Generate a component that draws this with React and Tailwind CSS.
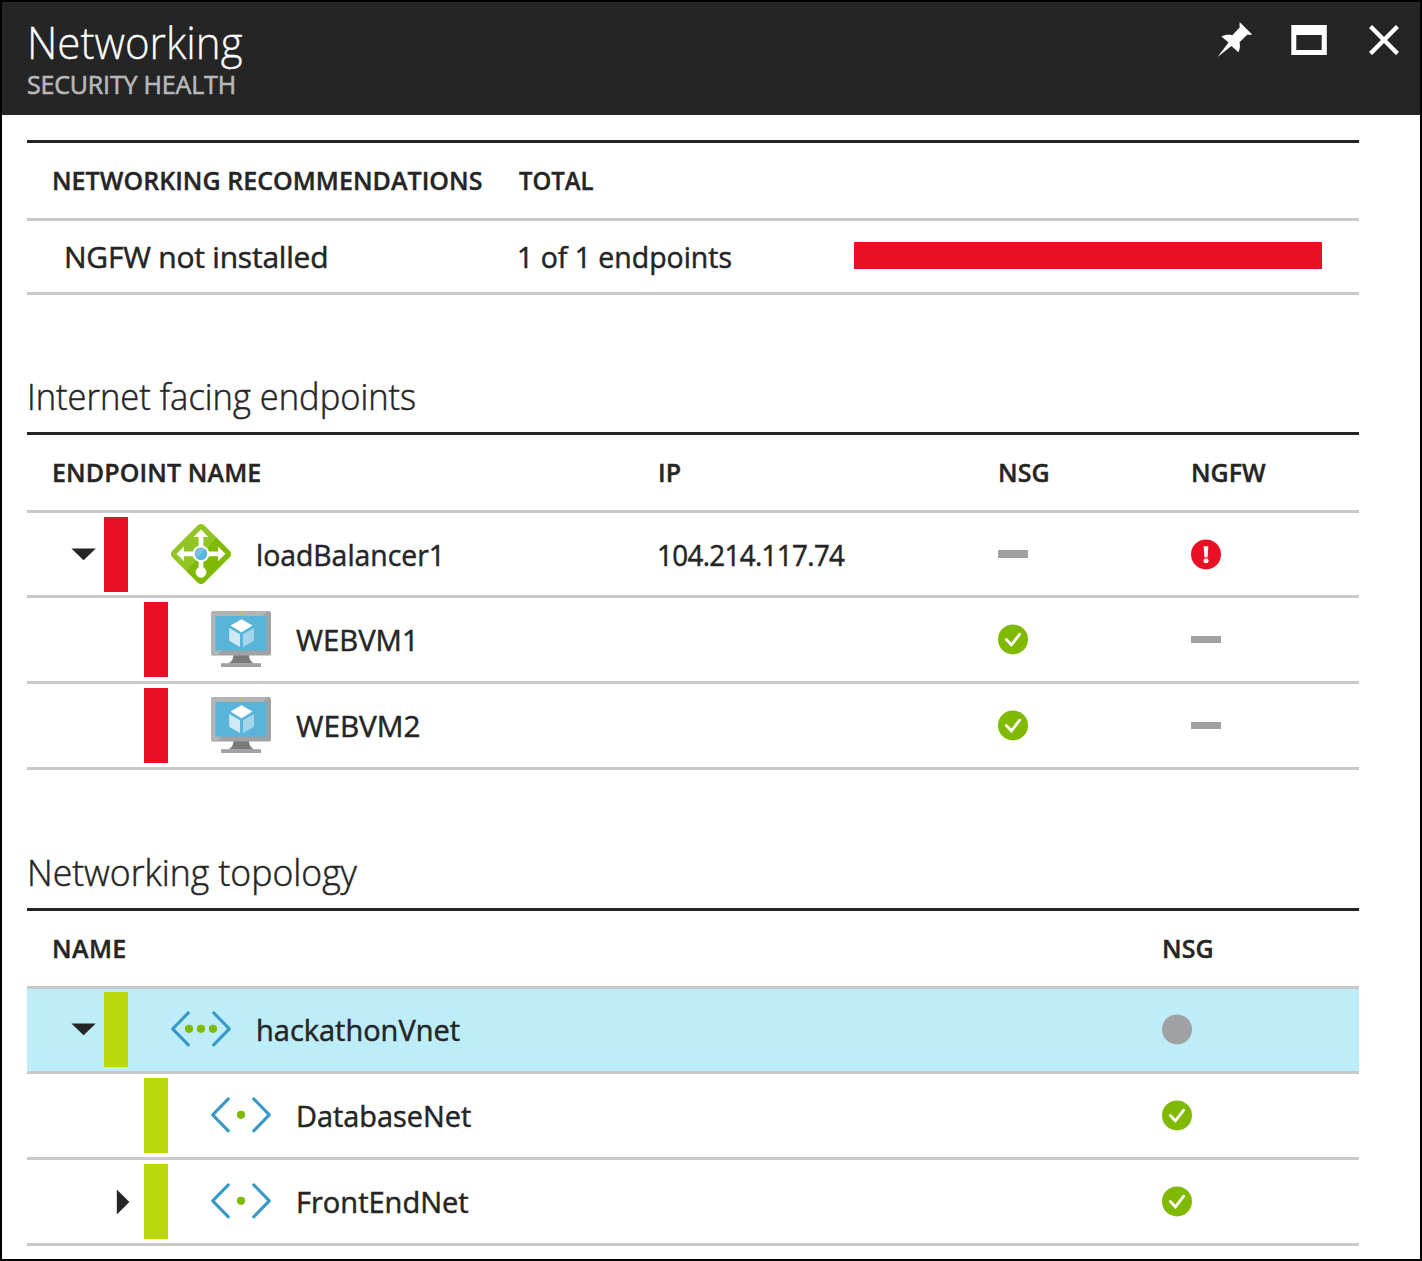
const cell = "flex items-center whitespace-nowrap";

function Caret({ open }) {
  return open ? (
    <svg width="26" height="13" viewBox="0 0 26 13"><path d="M0.4 0.4H24.8L12.6 12.2Z" fill="#252525" /></svg>
  ) : (
    <svg width="14" height="26" viewBox="0 0 14 26"><path d="M0.8 0.4V25.6L13.4 13Z" fill="#252525" /></svg>
  );
}

function LoadBalancerIcon() {
  return (
    <svg width="60" height="60" viewBox="0 0 60 60">
      <clipPath id="lb-diamond">
        <rect x="7.4" y="7.4" width="45.2" height="45.2" rx="4.6" transform="rotate(45 30 30)" />
      </clipPath>
      <g clipPath="url(#lb-diamond)">
        <rect width="60" height="60" fill="#7fba00" />
        <path d="M13 50 49 10 30-5-5 30Z" fill="#fff" opacity=".15" />
      </g>
      <path d="M30 10v38M12 29.800h36" stroke="#fff" strokeWidth="4.800" />
      <path d="M30 5.400 37.400 13H22.600ZM5.600 29.800 13 22.400V37.200ZM54.400 29.800 47 22.400V37.200Z" fill="#fff" />
      <circle cx="30" cy="48.300" r="5.400" fill="#fff" />
      <circle cx="30" cy="29.800" r="8.400" fill="#fff" />
      <circle cx="30" cy="29.800" r="6.300" fill="#59b4d9" />
      <path d="M25.800 34.200A6.200 6.200 0 0 1 34.300 25.300Z" fill="#fff" opacity=".18" />
    </svg>
  );
}

function VmIcon() {
  return (
    <svg width="60" height="56" viewBox="0 0 60 56">
      <path d="M22.500 43h15.500c0 5 1.500 7 5 9.500H17.500c3.500-2.500 5-4.500 5-9.500Z" fill="#7a7a7a" />
      <rect y="0" width="60" height="44.500" rx="2.600" fill="#a0a1a2" />
      <path d="M57 0H2.600A2.600 2.600 0 0 0 0 2.600V42a2.600 2.600 0 0 0 2.600 2.500H5Z" fill="#b3b4b5" />
      <rect x="4.600" y="5" width="51" height="34.600" fill="#59b4d9" />
      <path d="M30.500 8.200 41.500 14.600 30.500 21.200 19.500 14.600Z" fill="#fff" />
      <path d="M18.200 17 29 23.300V36L18.200 29.700Z" fill="#d0e9f5" />
      <path d="M43 17 32 23.300V36L43 29.700Z" fill="#a5d5ea" />
      <circle cx="29.700" cy="2.700" r="1.100" fill="#b8d432" />
      <rect x="10" y="52.200" width="40" height="3.800" fill="#a0a1a2" />
    </svg>
  );
}

function NetIcon({ dots }) {
  return (
    <svg width="60" height="36" viewBox="0 0 60 36">
      <path d="M17.300 1.800 1.700 17.800 17.300 33.800M42.700 1.800 58.300 17.800 42.700 33.800" fill="none" stroke="#3999c6" strokeWidth="3.100" strokeLinecap="round" strokeLinejoin="round" />
      {dots.map((x) => <circle key={x} cx={x} cy="17.800" r="4.100" fill="#7fba00" />)}
    </svg>
  );
}

function Status({ kind }) {
  if (kind === "dash") return <span className="h-[7.5px] w-[30px] bg-[#a0a1a2]" />;
  if (!kind) return null;
  return (
    <svg width="30" height="31" viewBox="0 0 30 31">
      <circle cx="15" cy="15.400" r="15" fill={kind === "ok" ? "#7fba00" : kind === "error" ? "#e81123" : "#a0a1a2"} />
      {kind === "ok" && <path d="M8.300 15.500 13.400 20.800 21.700 10.200" fill="none" stroke="#fff" strokeWidth="2.800" strokeLinecap="round" />}
      {kind === "error" && <><path d="M12.700 7.300h4.600l-.7 11h-3.200Z" fill="#fff" /><circle cx="15" cy="21.700" r="2.500" fill="#fff" /></>}
    </svg>
  );
}

const squeeze = "inline-block origin-left whitespace-nowrap";
const head = "grid h-[78px] border-b-[3px] border-[#c9c9c9] text-[25px] font-semibold leading-[75px] [-webkit-text-stroke:0.4px]";
const body = "[-webkit-text-stroke:0.5px]";
const heading = "text-[36px] font-light leading-[48px] [-webkit-text-stroke:0.5px]";
const endpointCols = "grid-cols-[631px_340px_193px_168px]";
const topologyCols = "grid-cols-[1135px_197px]";

function NameCell({ child, caret, bar, icon, label, fit }) {
  return (
    <div className={cell}>
      <span className={`flex shrink-0 items-center ${child ? "w-[117px] pl-[89px]" : "w-[77px] pl-[44px]"}`}>
        {caret && <Caret open={caret === "open"} />}
      </span>
      <span className={`h-[75px] w-6 shrink-0 ${bar}`} />
      <span className="ml-[43px] flex w-[60px] shrink-0 justify-center">{icon}</span>
      <span className={`ml-[25px] ${squeeze} ${fit}`}>{label}</span>
    </div>
  );
}

const vm = <span className="pb-[2px]"><VmIcon /></span>;
const subnet = <span className="pb-[2px]"><NetIcon dots={[30]} /></span>;

const endpoints = [
  { caret: "open", label: "loadBalancer1", fit: "scale-x-[0.945] pt-px", icon: <LoadBalancerIcon />, ip: "104.214.117.74", nsg: "dash", ngfw: "error", h: "h-[85px]" },
  { child: true, label: "WEBVM1", fit: "scale-x-[0.975]", icon: vm, nsg: "ok", ngfw: "dash", h: "h-[86px]" },
  { child: true, label: "WEBVM2", fit: "scale-x-[0.99]", icon: vm, nsg: "ok", ngfw: "dash", h: "h-[86px]" },
];

const networks = [
  { caret: "open", label: "hackathonVnet", fit: "scale-x-[0.966]", icon: <span className="pb-px"><NetIcon dots={[18, 30, 42]} /></span>, nsg: "none", h: "h-[85px] bg-[#beedfa] pb-[1px]" },
  { child: true, label: "DatabaseNet", fit: "scale-x-[0.962]", icon: subnet, nsg: "ok", h: "h-[86px]" },
  { child: true, caret: "closed", label: "FrontEndNet", fit: "scale-x-[0.968]", icon: subnet, nsg: "ok", h: "h-[86px]" },
];

export default function App() {
  return (
    <div className="h-[1261px] w-[1422px] overflow-hidden border-2 border-black bg-white font-['Open_Sans',sans-serif] text-[#252525]">
      <header className="flex h-[113px] justify-between bg-[#252525] pl-[25px] pt-[13px]">
        <div>
          <h1 className={`${squeeze} block scale-x-[0.935] text-[45px] font-light leading-[54px] text-white [-webkit-text-stroke:0.3px]`}>Networking</h1>
          <p className="-mt-[3px] text-[25px] leading-[36px] tracking-[-0.18px] text-[#b8b8b8] [-webkit-text-stroke:0.6px]">SECURITY HEALTH</p>
        </div>
        <div className="flex pr-[21px] pt-[7px]">
          <svg className="mr-[38.5px]" width="36" height="36" viewBox="0 0 36 36">
            <path d="M22.800 0.300 35.200 12.500C33.500 13 31.500 12.800 30.500 12.600L22.500 20.200C23.500 23.500 22.800 27.500 21.400 30.200L14.500 24 .500 35 11.500 20.400 4.400 14.400C7.500 12.800 12 12.400 15.300 13.300L22.800 5.300C22.500 3.500 22.300 1.800 22.800.300Z" fill="#fff" />
          </svg>
          <svg className="mr-[42px] mt-[3px]" width="36" height="30" viewBox="0 0 36 30">
            <path fillRule="evenodd" d="M.300 0H35.800V30H.300ZM5.300 10V25H30.700V10Z" fill="#fff" />
          </svg>
          <svg className="mt-[3px]" width="30" height="30" viewBox="0 0 30 30">
            <path d="M1.500 1.500 28.500 28.500M28.500 1.500 1.500 28.500" stroke="#fff" strokeWidth="4.400" />
          </svg>
        </div>
      </header>

      <main className="ml-[25px] w-[1332px] pt-[25px] text-[30px]">
        <section className="border-t-[3px] border-[#252525]">
          <div className={`${head} grid-cols-[491px_1fr]`}>
            <span className="pl-[25px] tracking-[0.04px]">NETWORKING RECOMMENDATIONS</span>
            <span><span className={`${squeeze} ml-px scale-x-[0.955]`}>TOTAL</span></span>
          </div>
          <div className="grid h-[74px] grid-cols-[491px_336px_1fr] border-b-[3px] border-[#c9c9c9]">
            <span className={`${cell} ${body} pl-[37px] tracking-[-0.22px]`}>NGFW not installed</span>
            <span className={`${cell} ${body}`}><span className={`${squeeze} -ml-px scale-x-[0.948]`}>1 of 1 endpoints</span></span>
            <span className={`${cell} pb-[2px]`}><span className="h-[27px] w-[468px] bg-[#e81123]" /></span>
          </div>
        </section>

        <h2 className={`${heading} mt-[78px]`}><span className={`${squeeze} -ml-[0.5px] scale-x-[0.958]`}>Internet facing endpoints</span></h2>
        <section className="mt-[11px] border-t-[3px] border-[#252525]">
          <div className={`${head} ${endpointCols}`}>
            <span className="pl-[25px] tracking-[0.12px]">ENDPOINT NAME</span>
            <span>IP</span>
            <span className="tracking-[0.1px]">NSG</span>
            <span>NGFW</span>
          </div>
          {endpoints.map((e) => (
            <div key={e.label} className={`grid border-b-[3px] border-[#c9c9c9] ${endpointCols} ${body} ${e.h}`}>
              <NameCell {...e} bar="bg-[#e81123]" />
              <span className={cell}><span className={`${squeeze} -ml-[1.5px] scale-x-[0.925] pt-px tracking-[-0.7px]`}>{e.ip}</span></span>
              <span className={cell}><Status kind={e.nsg} /></span>
              <span className={cell}><Status kind={e.ngfw} /></span>
            </div>
          ))}
        </section>

        <h2 className={`${heading} mt-[79px]`}><span className={`${squeeze} scale-x-[0.988]`}>Networking topology</span></h2>
        <section className="mt-[11px] border-t-[3px] border-[#252525]">
          <div className={`${head} ${topologyCols}`}>
            <span className="pl-[25px] tracking-[0.4px]">NAME</span>
            <span className="tracking-[0.1px]">NSG</span>
          </div>
          {networks.map((n) => (
            <div key={n.label} className={`grid border-b-[3px] border-[#c9c9c9] ${topologyCols} ${body} ${n.h}`}>
              <NameCell {...n} bar="bg-[#bad80a]" />
              <span className={cell}><Status kind={n.nsg} /></span>
            </div>
          ))}
        </section>
      </main>
    </div>
  );
}
